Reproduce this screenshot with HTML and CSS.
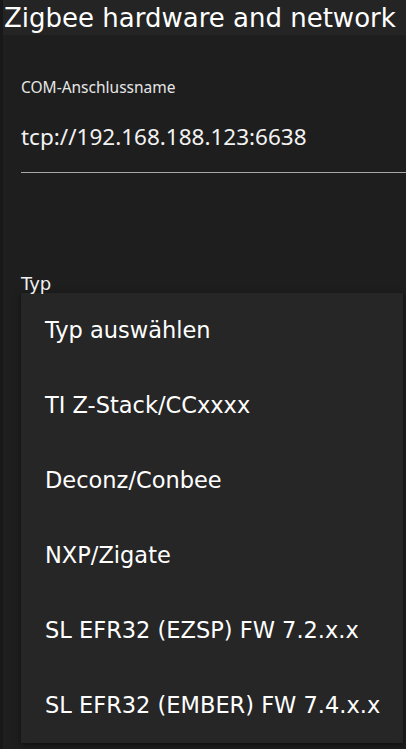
FILE: index.html
```html
<!DOCTYPE html>
<html lang="de">

<head>
    <meta charset="UTF-8">
    <meta name="viewport" content="width=device-width, initial-scale=1.0">
    <title>Zigbee hardware and network</title>
    <link rel="stylesheet" href="styles.css">
</head>

<body>
    <div id="page">
        <h2 class="title">Zigbee hardware and network</h2>

        <div class="field">
            <label class="field-label">COM-Anschlussname</label>
            <div class="field-value">tcp://192.168.188.123:6638</div>
        </div>

        <div class="select-field">
            <label class="select-label">Typ</label>
            <ul class="menu">
                <li>Typ auswählen</li>
                <li>TI Z-Stack/CCxxxx</li>
                <li>Deconz/Conbee</li>
                <li>NXP/Zigate</li>
                <li>SL EFR32 (EZSP) FW 7.2.x.x</li>
                <li>SL EFR32 (EMBER) FW 7.4.x.x</li>
            </ul>
        </div>
    </div>
</body>

</html>
```

FILE: styles.css
```css
html,
body {
    margin: 0;
    height: 100%;
    background-color: #181818;
}

#page {
    margin-left: 3px;
    min-height: 100%;
    background-color: #1e1e1e;
    font-family: 'DejaVu Sans', sans-serif;
    color: #ffffff;
    overflow: hidden;
}

.title {
    margin: 0;
    padding: 3px 0 1px 1px;
    height: 31px;
    background-color: #242424;
    font-size: 26px;
    font-weight: normal;
    line-height: 31px;
    white-space: nowrap;
}

.field {
    padding: 42px 0 0 18px;
}

.field-label {
    display: block;
    font-family: 'Noto Sans', sans-serif;
    font-size: 15.5px;
    line-height: 20px;
    color: #e6e6e6;
}

.field-value {
    margin-top: 25px;
    padding-bottom: 20px;
    font-family: 'Noto Sans', sans-serif;
    font-size: 22.5px;
    line-height: 30px;
    border-bottom: 1px solid #a8a8a8;
    color: #f2f2f2;
}

.select-field {
    padding: 101px 0 0 18px;
}

.select-label {
    display: block;
    font-size: 18px;
    line-height: 19px;
    color: #f0f0f0;
}

.menu {
    list-style: none;
    margin: 0 3px 0 0;
    padding: 0;
    background-color: #262626;
    box-shadow: rgba(0, 0, 0, 0.5) 0px 2px 6px;
}

.menu li {
    height: 75px;
    padding-left: 24px;
    font-size: 22.5px;
    line-height: 75px;
    white-space: nowrap;
}
```
